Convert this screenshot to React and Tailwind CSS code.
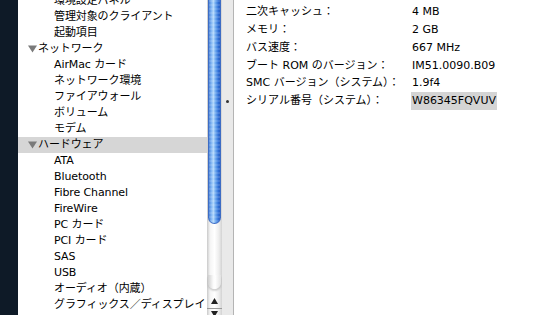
import React from "react";

const font = {
  fontFamily: '"DejaVu Sans", "Noto Sans CJK JP", sans-serif',
};

const sidebarRows = [
  { label: "環境設定パネル" },
  { label: "管理対象のクライアント" },
  { label: "起動項目" },
  { label: "ネットワーク", group: true },
  { label: "AirMac カード" },
  { label: "ネットワーク環境" },
  { label: "ファイアウォール" },
  { label: "ボリューム" },
  { label: "モデム" },
  { label: "ハードウェア", group: true, selected: true },
  { label: "ATA" },
  { label: "Bluetooth" },
  { label: "Fibre Channel" },
  { label: "FireWire" },
  { label: "PC カード" },
  { label: "PCI カード" },
  { label: "SAS" },
  { label: "USB" },
  { label: "オーディオ（内蔵）" },
  { label: "グラフィックス／ディスプレイ" },
];

const specs = [
  ["二次キャッシュ：", "4 MB"],
  ["メモリ：", "2 GB"],
  ["バス速度：", "667 MHz"],
  ["ブート ROM のバージョン：", "IM51.0090.B09"],
  ["SMC バージョン（システム）：", "1.9f4"],
  ["シリアル番号（システム）：", "W86345FQVUV", true],
];

function Disclosure() {
  return (
    <svg width="9" height="8" viewBox="0 0 9 8" className="shrink-0">
      <polygon points="0,0.5 9,0.5 4.5,7.5" fill="#7a7a7a" />
    </svg>
  );
}

function SourceList() {
  return (
    <div className="w-[189px] h-full bg-white overflow-hidden">
      <div className="-mt-[7px]">
        {sidebarRows.map((row) => (
          <div
            key={row.label}
            className={`h-[16px] flex items-center text-[11px] text-black whitespace-nowrap ${
              row.selected ? "bg-[#d6d6d6]" : ""
            } ${row.group ? "pl-[10px] gap-[1px]" : "pl-[36px]"}`}
          >
            {row.group && <Disclosure />}
            <span className="pt-[1px] tracking-[-0.1px]">{row.label}</span>
          </div>
        ))}
      </div>
    </div>
  );
}

function Scrollbar() {
  return (
    <div className="w-[15px] h-full flex flex-col bg-[linear-gradient(to_right,#c9c9c9,#f4f4f4_20%,#ffffff_50%,#ececec_80%,#d2d2d2)]">
      {/* thumb */}
      <div className="h-[232px] -mt-[8px] mx-[1px] rounded-b-full border border-[#3d6cc4] border-t-0 bg-[linear-gradient(to_right,#4f86d8,#7db2f2_20%,#b2d8fc_40%,#6aa6ee_60%,#2f6fd6_85%,#2a5fbf)]">
        <div className="h-full w-full bg-[repeating-linear-gradient(to_bottom,rgba(255,255,255,0.12)_0px,rgba(255,255,255,0.12)_2px,transparent_2px,transparent_4px)] rounded-b-full" />
      </div>
      {/* track */}
      <div className="flex-1 flex flex-col justify-end">
        <div className="h-[14px] mx-[1px] rounded-b-full shadow-[0_2px_2px_rgba(0,0,0,0.18)] bg-[linear-gradient(to_right,#cfcfcf,#fafafa_40%,#ffffff_55%,#e2e2e2)]" />
      </div>
      {/* arrows */}
      <div className="h-[16px] mt-[4px] flex items-center justify-center border-b border-[#9a9a9a]">
        <svg width="7" height="6" viewBox="0 0 7 6">
          <polygon points="3.5,0 7,6 0,6" fill="#222" />
        </svg>
      </div>
      <div className="h-[6px] flex justify-center pt-[2px]">
        <svg width="7" height="6" viewBox="0 0 7 6">
          <polygon points="0,0 7,0 3.5,6" fill="#222" />
        </svg>
      </div>
    </div>
  );
}

function Splitter() {
  return (
    <div className="w-[12px] h-full bg-[#e9e9e9] border-r border-[#b4b4b4] flex flex-col items-center pt-[100px]">
      <div className="w-[3px] h-[3px] rounded-full bg-[#333]" />
    </div>
  );
}

function Details() {
  return (
    <div className="flex-1 h-full bg-white pt-[3px] pl-[12px]">
      {specs.map(([label, value, highlight]) => (
        <div key={label} className="h-[17.8px] flex items-center text-[11px] text-black whitespace-nowrap pt-[1px]">
          <span className="w-[166px]">{label}</span>
          <span className={highlight ? "bg-[#d4d4d4] px-[1px] -ml-[1px] leading-[18px]" : ""}>{value}</span>
        </div>
      ))}
    </div>
  );
}

export default function App() {
  return (
    <div className="w-[560px] h-[315px] overflow-hidden flex bg-white" style={font}>
      <div className="w-[18px] h-full bg-[#0e1a27]" />
      <SourceList />
      <Scrollbar />
      <Splitter />
      <Details />
    </div>
  );
}
